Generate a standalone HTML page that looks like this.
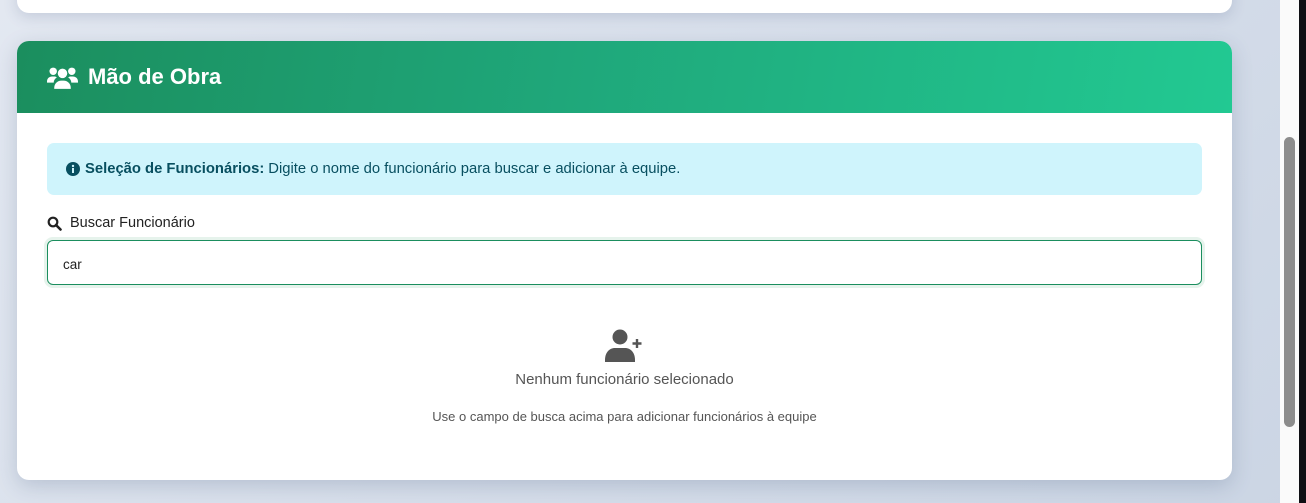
<!DOCTYPE html>
<html><head><meta charset="utf-8"><style>
*{box-sizing:border-box;margin:0;padding:0}
body{width:1306px;height:503px;overflow:hidden;background:linear-gradient(135deg,#e3e8f1,#cbd5e4);font-family:"Liberation Sans","DejaVu Sans",sans-serif;position:relative}
.card0{position:absolute;left:17px;top:-20px;width:1215px;height:33px;background:#fff;border-radius:12px;box-shadow:0 4px 14px rgba(60,80,120,.18)}
.card{position:absolute;left:17px;top:41px;width:1215px;height:439px;background:#fff;border-radius:12px;overflow:hidden;box-shadow:0 6px 20px rgba(60,80,120,.22)}
.hd{height:72px;background:linear-gradient(100deg,#1b8e5e 0%,#1fa77a 45%,#22c992 100%);color:#fff;display:flex;align-items:center;padding-left:30px}
.hd h2{font-size:22px;font-weight:bold;margin-left:10px}
.alert{position:absolute;left:30px;top:102px;width:1155px;height:52px;background:#cff4fc;border-radius:7px;color:#084f60;font-size:14.8px;display:flex;align-items:center;padding-left:19px}
.alert b{margin:0 4px 0 5px}
.lbl{position:absolute;left:30px;top:174px;font-size:14.5px;color:#222;display:flex;align-items:center}
.inp{position:absolute;left:30px;top:199px;width:1155px;height:45px;border:1px solid #1b8e5e;border-radius:6px;box-shadow:0 0 0 3px #e6f3ec;font-size:13.5px;color:#222;padding:16px 0 0 15px}
.empty{position:absolute;left:0;width:1215px;text-align:center;color:#555}
.sb{position:absolute;left:1280px;top:0;width:19px;height:503px;background:#fafafa}
.th{position:absolute;left:1284px;top:137px;width:11px;height:290px;background:#8c8c8c;border-radius:6px}
.bl{position:absolute;left:1299px;top:0;width:7px;height:503px;background:#0e0f14}
</style></head><body>
<div class="card0"></div>
<div class="card">
 <div class="hd">
  <svg width="31" height="25" viewBox="0 0 30 24" fill="#fff"><circle cx="6" cy="6" r="3.6"/><circle cx="24" cy="6" r="3.6"/><circle cx="15" cy="8" r="4.6"/><path d="M0 16c0-3 2-5 5-5h2c1 0 2 .3 2.5 1-2 1.2-3 3-3 5H0z"/><path d="M30 16c0-3-2-5-5-5h-2c-1 0-2 .3-2.5 1 2 1.2 3 3 3 5H30z"/><path d="M7 22c0-4 3-7 7-7h2c4 0 7 3 7 7v1H7z"/></svg>
  <h2>Mão de Obra</h2>
 </div>
 <div class="alert"><svg width="14" height="14" viewBox="0 0 14 14"><circle cx="7" cy="7" r="7" fill="#084f60"/><rect x="6" y="6" width="2" height="5" fill="#cff4fc"/><circle cx="7" cy="4" r="1.2" fill="#cff4fc"/></svg><b>Seleção de Funcionários:</b> Digite o nome do funcionário para buscar e adicionar à equipe.</div>
 <div class="lbl"><svg width="15" height="15" viewBox="0 0 15 15"><circle cx="6" cy="6" r="4.3" fill="none" stroke="#222" stroke-width="2.2"/><path d="M9 9l4.5 4.5" stroke="#222" stroke-width="2.6" stroke-linecap="round"/></svg><span style="margin-left:8px">Buscar Funcionário</span></div>
 <div class="inp">car</div>
 <div class="empty" style="top:288px"><svg width="40" height="33" viewBox="0 0 40 33" fill="#555"><circle cx="15" cy="8" r="7.5"/><path d="M0 31c0-7 4-12 10-12h10c6 0 10 5 10 12v2H0z"/><path d="M32 10v9M27.5 14.5h9" stroke="#555" stroke-width="2.4"/></svg></div>
 <div class="empty" style="top:330px;font-size:15px">Nenhum funcionário selecionado</div>
 <div class="empty" style="top:368px;font-size:13px">Use o campo de busca acima para adicionar funcionários à equipe</div>
</div>
<div class="sb"></div><div class="th"></div><div class="bl"></div>
</body></html>
